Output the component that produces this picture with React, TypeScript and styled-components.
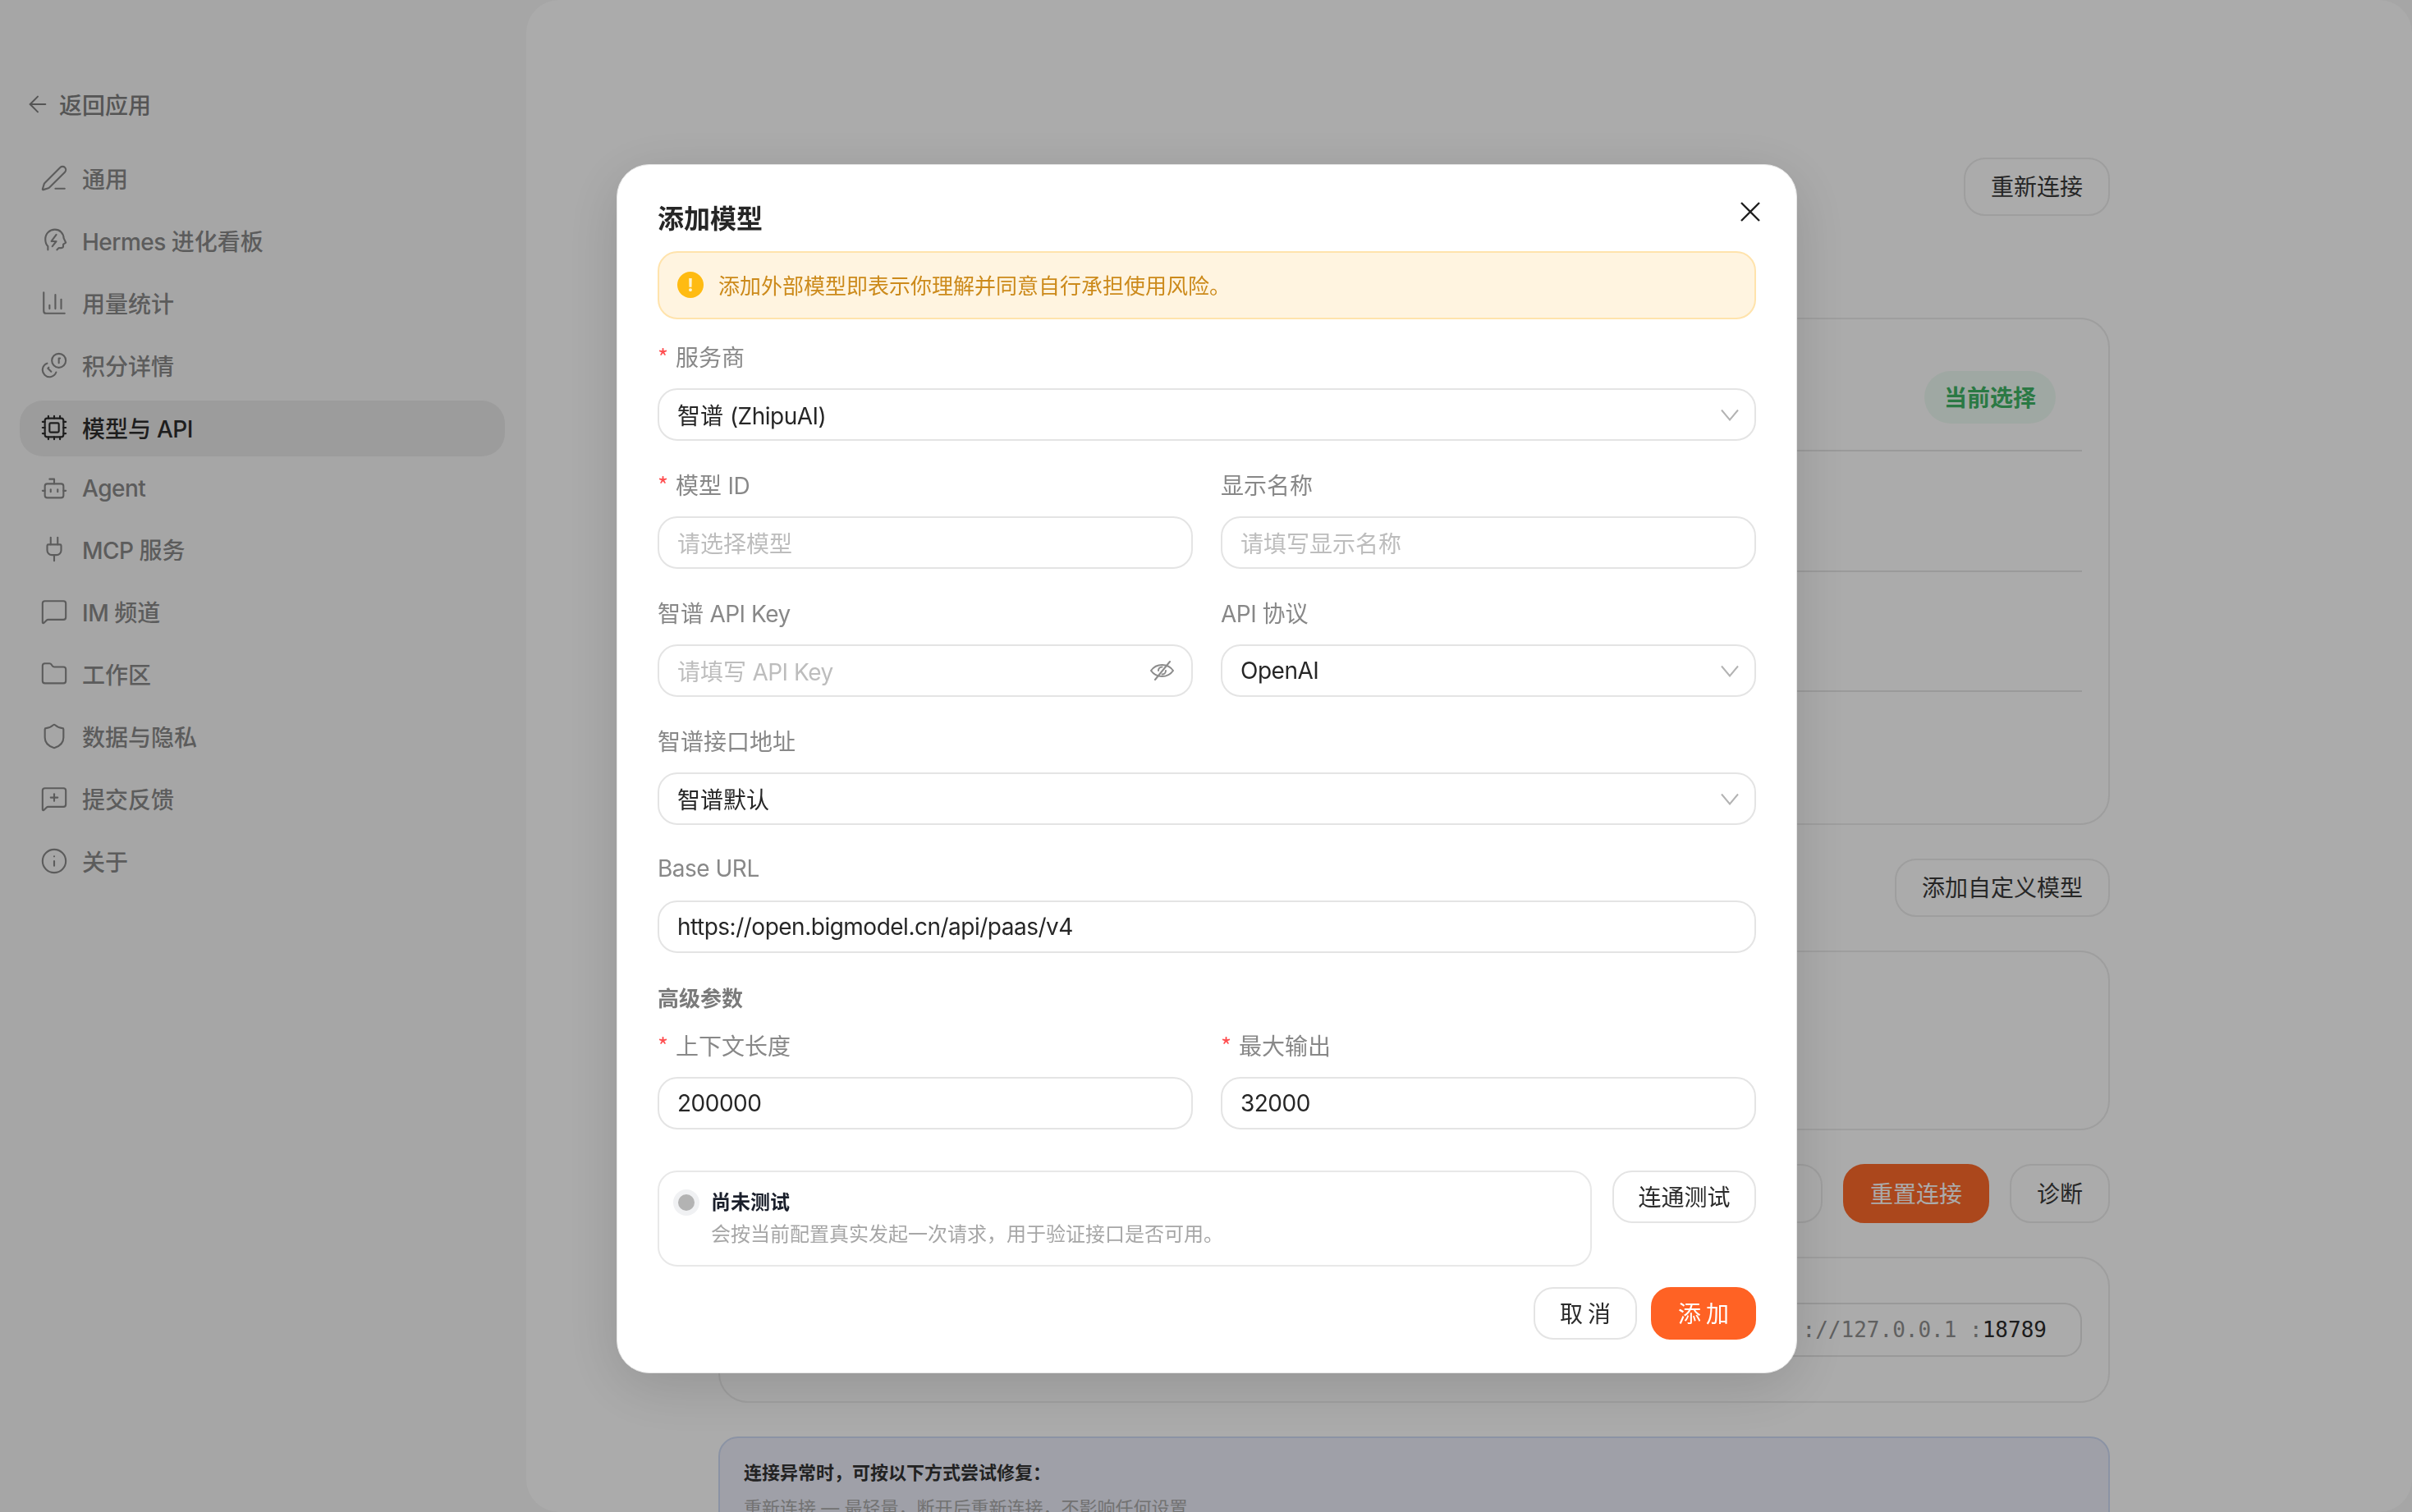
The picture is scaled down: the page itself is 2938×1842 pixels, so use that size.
import { createGlobalStyle, styled } from "styled-components";
import {
  ArrowLeft,
  Bot,
  ChartColumn,
  Coins,
  Cpu,
  Folder,
  Info,
  MessageSquare,
  MessageSquarePlus,
  PenLine,
  Plug,
  Shield,
} from "lucide-react";
import type { ReactNode } from "react";

const GlobalStyle = createGlobalStyle`
  html, body {
    margin: 0;
    height: 1842px;
    overflow: hidden;
    background: #f8f8f8;
  }
  body {
    font-family: "Inter", "Noto Sans CJK SC", sans-serif;
    color: #262626;
  }
  * { box-sizing: border-box; }
`;

const Page = styled.div`
  display: flex;
  width: 2938px;
  height: 1842px;
  overflow: hidden;
`;

const Sidebar = styled.aside`
  flex: 0 0 641px;
  padding: 107px 26px 0 24px;
`;

const BackLink = styled.div`
  display: flex;
  align-items: center;
  gap: 10px;
  height: 40px;
  margin-left: 6px;
  margin-bottom: 37px;
  font-size: 28px;
  font-weight: 500;
  color: #7f7f7f;
`;

const NavList = styled.nav`
  display: flex;
  flex-direction: column;
  gap: 8px;
`;

const NavItem = styled.div<{ $active?: boolean; $short?: boolean }>`
  display: flex;
  align-items: center;
  gap: 17px;
  height: ${(p) => (p.$short ? "64px" : "68px")};
  padding: 0 0 2px 25px;
  border-radius: 28px;
  font-size: 28px;
  font-weight: 500;
  color: ${(p) => (p.$active ? "#2e2e2e" : "#8a8a8a")};
  background: ${(p) => (p.$active ? "#e9e9e9" : "transparent")};
`;

// Latin runs sit a little tighter than plain Inter in the design
const Latin = styled.span`
  letter-spacing: -0.5px;
  white-space: pre;
`;

const Mirrored = styled.span`
  display: flex;
  transform: scaleX(-1);
`;

const Main = styled.main`
  flex: 1;
  height: 1842px;
  padding: 192px 368px 0 234px;
  background: #ffffff;
  border-radius: 40px;
  display: flex;
  flex-direction: column;
  gap: 41px;
  overflow: hidden;
`;

const EndRow = styled.div`
  display: flex;
  justify-content: flex-end;
  gap: 25px;
`;

const OutlineButton = styled.div<{ $width?: number; $tall?: boolean }>`
  display: flex;
  align-items: center;
  justify-content: center;
  flex: 0 0 auto;
  height: ${(p) => (p.$tall ? "72px" : "71px")};
  width: ${(p) => (p.$width ? `${p.$width}px` : "auto")};
  padding: 0 31px 3px;
  border: 2px solid #ececec;
  border-radius: 26px;
  font-size: 28px;
  color: #3a3a3a;
  background: #ffffff;
`;

const DangerButton = styled(OutlineButton)`
  border-color: #ff6a2b;
  background: #ff6a2b;
  color: #ffffff;
`;

const Card = styled.section<{ $top?: number; $height: number }>`
  flex: 0 0 auto;
  height: ${(p) => p.$height}px;
  margin-top: ${(p) => p.$top ?? 0}px;
  padding: 0 32px;
  border: 2px solid #ececec;
  border-radius: 36px;
`;

const ModelRow = styled.div<{ $height: number; $last?: boolean }>`
  display: flex;
  align-items: center;
  justify-content: flex-end;
  height: ${(p) => p.$height}px;
  padding: 31px 32px 0 0;
  border-bottom: ${(p) => (p.$last ? "none" : "2px solid #e6e6e6")};
`;

const CurrentPill = styled.span`
  display: flex;
  align-items: center;
  height: 64px;
  padding: 0 24px 3px;
  border-radius: 32px;
  font-size: 28px;
  font-weight: 600;
  color: #3fb566;
  background: #eefbf3;
`;

const AddressCard = styled(Card)`
  display: flex;
  justify-content: flex-end;
  padding-top: 54px;
`;

const AddressBox = styled.div`
  display: flex;
  align-items: center;
  justify-content: flex-end;
  width: 800px;
  height: 66px;
  padding-right: 41px;
  border: 2px solid #e4e4e4;
  border-radius: 22px;
  font-family: "DejaVu Sans Mono", monospace;
  font-size: 26px;
  color: #909090;
  white-space: pre;
`;

const AddressPort = styled.span`
  color: #2c2c2c;
`;

const HelpBox = styled.section`
  flex: 0 0 auto;
  padding: 25px 29px;
  border: 2px solid #d0dcf5;
  border-radius: 24px;
  background: #eeeffb;
`;

const HelpTitle = styled.div`
  font-size: 22px;
  line-height: 34px;
  font-weight: 700;
  color: #333333;
`;

const HelpLine = styled.div`
  margin-top: 9px;
  font-size: 22px;
  line-height: 34px;
  color: #aaaaaa;
`;

const Overlay = styled.div`
  position: fixed;
  inset: 0;
  display: flex;
  justify-content: center;
  align-items: flex-start;
  padding-top: 200px;
  background: rgba(0, 0, 0, 0.33);
`;

const Modal = styled.div`
  position: relative;
  width: 1438px;
  height: 1473px;
  margin-left: 2px;
  padding: 44px 49px 0;
  background: #ffffff;
  border-radius: 40px;
  border: 1px solid #e6e6e6;
  box-shadow: 0 16px 70px rgba(0, 0, 0, 0.14);
`;

const CloseButton = styled.svg`
  position: absolute;
  top: 44px;
  right: 43px;
  display: block;
`;

const Title = styled.h2`
  margin: 0 0 17px;
  font-size: 32px;
  line-height: 44px;
  font-weight: 600;
  color: #262626;
`;

const Alert = styled.div`
  display: flex;
  align-items: center;
  gap: 18px;
  height: 83px;
  margin-bottom: 26px;
  padding: 0 22px 2px;
  border: 2px solid #ffe3ac;
  border-radius: 24px;
  background: #fff4e0;
  font-size: 26px;
  color: #cc8a1b;
`;

const AlertIcon = styled.span`
  display: flex;
  align-items: center;
  justify-content: center;
  flex: 0 0 32px;
  height: 32px;
  border-radius: 50%;
  background: #ffbb12;
  color: #fff3d0;
  font-size: 22px;
  font-weight: 700;
`;

const Form = styled.div`
  display: flex;
  flex-direction: column;
  gap: 34px;
`;

const TwoColumns = styled.div`
  display: grid;
  grid-template-columns: 1fr 1fr;
  gap: 34px;
`;

const Field = styled.div`
  display: flex;
  flex-direction: column;
  gap: 18px;
`;

const Label = styled.label`
  display: flex;
  height: 40px;
  padding-bottom: 2px;
  align-items: center;
  font-size: 28px;
  color: #888888;
`;

const Required = styled.span`
  flex: 0 0 22px;
  color: #ff4d4f;
  font-family: "Noto Sans CJK SC", sans-serif;
  font-size: 28px;
`;

const Control = styled.div<{ $placeholder?: boolean }>`
  display: flex;
  align-items: center;
  justify-content: space-between;
  height: 64px;
  padding: 0 19px 0 22px;
  border: 2px solid #e4e4e4;
  border-radius: 24px;
  font-size: 28px;
  color: ${(p) => (p.$placeholder ? "#bdbdbd" : "#262626")};
`;

const GroupTitle = styled.div`
  height: 40px;
  margin-bottom: -15px;
  padding-bottom: 2px;
  display: flex;
  align-items: center;
  font-size: 26px;
  font-weight: 600;
  color: #7a7a7a;
`;

const TestRow = styled.div`
  display: flex;
  align-items: flex-start;
  gap: 25px;
  margin-top: 50px;
`;

const TestBox = styled.div`
  flex: 1;
  display: flex;
  gap: 14px;
  height: 117px;
  padding: 20px 17px;
  border: 2px solid #e8e8e8;
  border-radius: 24px;
`;

const StatusDot = styled.span`
  flex: 0 0 32px;
  height: 32px;
  margin-top: 1px;
  border-radius: 50%;
  background: #b3b3b3;
  border: 6px solid #f0f1f3;
`;

const TestTitle = styled.div`
  font-size: 24px;
  line-height: 34px;
  font-weight: 700;
  color: #1a1f2b;
`;

const TestHint = styled.div`
  margin-top: 5px;
  font-size: 24px;
  line-height: 34px;
  color: #a6a6a6;
`;

const ModalButton = styled.div<{ $primary?: boolean; $wide?: boolean }>`
  display: flex;
  align-items: center;
  justify-content: center;
  flex: 0 0 auto;
  width: ${(p) => (p.$wide ? "175px" : p.$primary ? "128px" : "126px")};
  height: 64px;
  padding-bottom: 3px;
  border: 2px solid ${(p) => (p.$primary ? "#ff6224" : "#e4e4e4")};
  border-radius: 24px;
  font-size: 28px;
  letter-spacing: ${(p) => (p.$wide ? "0" : "6px")};
  text-indent: ${(p) => (p.$wide ? "0" : "6px")};
  color: ${(p) => (p.$primary ? "#ffffff" : "#2b2b2b")};
  background: ${(p) => (p.$primary ? "#ff6224" : "#ffffff")};
`;

const Footer = styled.div`
  display: flex;
  justify-content: flex-end;
  gap: 17px;
  margin-top: 25px;
`;

const EyeSvg = styled.svg`
  margin-right: 2px;
`;

const iconProps = { size: 34, strokeWidth: 1.5 };

// head with a bolt, lucide has no such icon
const HeadBolt = () => (
  <svg width="34" height="34" viewBox="0 0 24 24" fill="none" stroke="currentColor" strokeWidth="1.5" strokeLinecap="round" strokeLinejoin="round">
    <path d="M6.6 20v-3C5 15.5 4.4 13 4.4 10.8 4.4 6 8 2.6 12.6 2.6c4.4 0 7.4 3.2 7.6 7.4l1.8 3.8-2.2 1.4v1.6c0 1-.8 1.6-1.8 1.6h-2L14.4 20" />
    <path d="M13.8 7 9.6 12.7h4.2L10.4 17" />
  </svg>
);

const Chevron = () => (
  <svg width="22" height="15" viewBox="0 0 22 15" fill="none" stroke="#b3b3b3" strokeWidth="2">
    <path d="M1 1.5 11 13.5 21 1.5" />
  </svg>
);

const EyeHidden = () => (
  <EyeSvg width="29" height="24" viewBox="0 0 29 24" fill="none" stroke="#8c8c8c" strokeWidth="2" strokeLinecap="round">
    <path d="M1 12c3.2-4.6 7.6-7 13.5-7S24.8 7.4 28 12c-3.2 4.6-7.600 7-13.500 7S4.200 16.600 1 12z" />
    <path d="M19 12a4.500 4.500 0 0 1-4.500 4.500M10 12a4.500 4.500 0 0 1 4.500-4.500" />
    <path d="M6 23 24 1" />
  </EyeSvg>
);

const navItems: { label: ReactNode; key: string; icon: ReactNode; active?: boolean; short?: boolean }[] = [
  { key: "general", label: "通用", icon: <PenLine {...iconProps} /> },
  { key: "hermes", label: <><Latin>Hermes </Latin>进化看板</>, icon: <HeadBolt /> },
  { key: "usage", label: "用量统计", icon: <ChartColumn {...iconProps} /> },
  { key: "credits", label: "积分详情", icon: <Mirrored><Coins {...iconProps} /></Mirrored> },
  { key: "models", label: <>模型与<Latin> API</Latin></>, icon: <Cpu {...iconProps} />, active: true },
  { key: "agent", label: <Latin>Agent</Latin>, icon: <Bot {...iconProps} />, short: true },
  { key: "mcp", label: <><Latin>MCP </Latin>服务</>, icon: <Plug {...iconProps} /> },
  { key: "im", label: <><Latin>IM </Latin>频道</>, icon: <MessageSquare {...iconProps} /> },
  { key: "workspace", label: "工作区", icon: <Folder {...iconProps} /> },
  { key: "privacy", label: "数据与隐私", icon: <Shield {...iconProps} /> },
  { key: "feedback", label: "提交反馈", icon: <MessageSquarePlus {...iconProps} /> },
  { key: "about", label: "关于", icon: <Info {...iconProps} /> },
];

function FormField(props: { label: ReactNode; required?: boolean; children: ReactNode }) {
  return (
    <Field>
      <Label>
        {props.required && <Required>*</Required>}
        <span>{props.label}</span>
      </Label>
      {props.children}
    </Field>
  );
}

export default function App() {
  return (
    <>
      <GlobalStyle />
      <Page>
        <Sidebar>
          <BackLink>
            <ArrowLeft size={32} strokeWidth={1.5} />
            返回应用
          </BackLink>
          <NavList>
            {navItems.map((item) => (
              <NavItem key={item.key} $active={item.active} $short={item.short}>
                {item.icon}
                <span>{item.label}</span>
              </NavItem>
            ))}
          </NavList>
        </Sidebar>

        <Main>
          <EndRow>
            <OutlineButton>重新连接</OutlineButton>
          </EndRow>
          <Card $top={83} $height={618}>
            <ModelRow $height={161}>
              <CurrentPill>当前选择</CurrentPill>
            </ModelRow>
            <ModelRow $height={147} />
            <ModelRow $height={146} />
            <ModelRow $height={160} $last />
          </Card>
          <EndRow>
            <OutlineButton>添加自定义模型</OutlineButton>
          </EndRow>
          <Card $height={219} />
          <EndRow>
            <OutlineButton $tall $width={180} />
            <DangerButton $tall>重置连接</DangerButton>
            <OutlineButton $tall>诊断</OutlineButton>
          </EndRow>
          <AddressCard $height={178}>
            <AddressBox>
              ://127.0.0.1 :<AddressPort>18789</AddressPort>
            </AddressBox>
          </AddressCard>
          <HelpBox>
            <HelpTitle>连接异常时，可按以下方式尝试修复：</HelpTitle>
            <HelpLine>重新连接 — 最轻量，断开后重新连接，不影响任何设置</HelpLine>
          </HelpBox>
        </Main>
      </Page>

      <Overlay>
        <Modal>
          <CloseButton width="26" height="26" viewBox="0 0 26 26" fill="none" stroke="#1f1f1f" strokeWidth="2.4">
            <path d="M2 2 24 24M24 2 2 24" />
          </CloseButton>
          <Title>添加模型</Title>
          <Alert>
            <AlertIcon>!</AlertIcon>
            添加外部模型即表示你理解并同意自行承担使用风险。
          </Alert>
          <Form>
            <FormField label="服务商" required>
              <Control>
                <span>智谱 <Latin>(ZhipuAI)</Latin></span>
                <Chevron />
              </Control>
            </FormField>
            <TwoColumns>
              <FormField label={<>模型<Latin> ID</Latin></>} required>
                <Control $placeholder>请选择模型</Control>
              </FormField>
              <FormField label="显示名称">
                <Control $placeholder>请填写显示名称</Control>
              </FormField>
            </TwoColumns>
            <TwoColumns>
              <FormField label={<>智谱<Latin> API Key</Latin></>}>
                <Control $placeholder>
                  <span>请填写<Latin> API Key</Latin></span>
                  <EyeHidden />
                </Control>
              </FormField>
              <FormField label={<><Latin>API </Latin>协议</>}>
                <Control>
                  <Latin>OpenAI</Latin>
                  <Chevron />
                </Control>
              </FormField>
            </TwoColumns>
            <FormField label="智谱接口地址">
              <Control>
                智谱默认
                <Chevron />
              </Control>
            </FormField>
            <FormField label={<Latin>Base URL</Latin>}>
              <Control>
                <Latin>https://open.bigmodel.cn/api/paas/v4</Latin>
              </Control>
            </FormField>
            <GroupTitle>高级参数</GroupTitle>
            <TwoColumns>
              <FormField label="上下文长度" required>
                <Control><Latin>200000</Latin></Control>
              </FormField>
              <FormField label="最大输出" required>
                <Control><Latin>32000</Latin></Control>
              </FormField>
            </TwoColumns>
          </Form>
          <TestRow>
            <TestBox>
              <StatusDot />
              <div>
                <TestTitle>尚未测试</TestTitle>
                <TestHint>会按当前配置真实发起一次请求，用于验证接口是否可用。</TestHint>
              </div>
            </TestBox>
            <ModalButton $wide>连通测试</ModalButton>
          </TestRow>
          <Footer>
            <ModalButton>取消</ModalButton>
            <ModalButton $primary>添加</ModalButton>
          </Footer>
        </Modal>
      </Overlay>
    </>
  );
}
